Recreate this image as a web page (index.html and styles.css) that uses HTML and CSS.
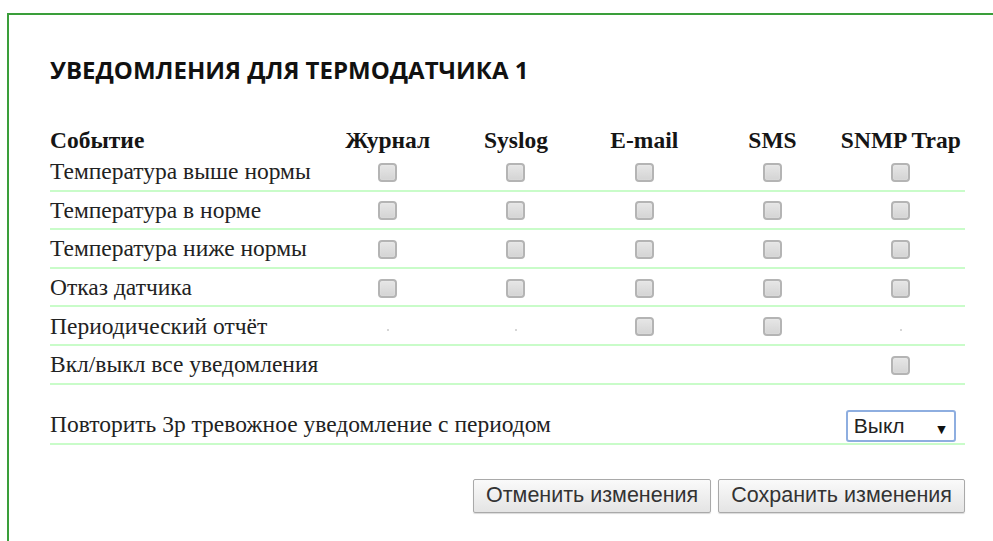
FILE: index.html
```html
<!DOCTYPE html>
<html lang="ru">
<head>
<meta charset="utf-8">
<title>Уведомления для термодатчика 1</title>
<link rel="stylesheet" href="styles.css">
</head>
<body>
<div class="panel">
  <h2 class="title">УВЕДОМЛЕНИЯ ДЛЯ ТЕРМОДАТЧИКА 1</h2>
  <table class="notify">
    <colgroup>
      <col class="c-event">
      <col class="c-ch"><col class="c-ch"><col class="c-ch"><col class="c-ch"><col class="c-ch">
    </colgroup>
    <thead>
      <tr>
        <th class="ev">Событие</th>
        <th>Журнал</th>
        <th>Syslog</th>
        <th>E-mail</th>
        <th>SMS</th>
        <th>SNMP Trap</th>
      </tr>
    </thead>
    <tbody>
      <tr class="row">
        <td class="ev">Температура выше нормы</td>
        <td><input type="checkbox" class="cb"></td>
        <td><input type="checkbox" class="cb"></td>
        <td><input type="checkbox" class="cb"></td>
        <td><input type="checkbox" class="cb"></td>
        <td><input type="checkbox" class="cb"></td>
      </tr>
      <tr class="row">
        <td class="ev">Температура в норме</td>
        <td><input type="checkbox" class="cb"></td>
        <td><input type="checkbox" class="cb"></td>
        <td><input type="checkbox" class="cb"></td>
        <td><input type="checkbox" class="cb"></td>
        <td><input type="checkbox" class="cb"></td>
      </tr>
      <tr class="row">
        <td class="ev">Температура ниже нормы</td>
        <td><input type="checkbox" class="cb"></td>
        <td><input type="checkbox" class="cb"></td>
        <td><input type="checkbox" class="cb"></td>
        <td><input type="checkbox" class="cb"></td>
        <td><input type="checkbox" class="cb"></td>
      </tr>
      <tr class="row">
        <td class="ev">Отказ датчика</td>
        <td><input type="checkbox" class="cb"></td>
        <td><input type="checkbox" class="cb"></td>
        <td><input type="checkbox" class="cb"></td>
        <td><input type="checkbox" class="cb"></td>
        <td><input type="checkbox" class="cb"></td>
      </tr>
      <tr class="row">
        <td class="ev">Периодический отчёт</td>
        <td><span class="na"></span></td>
        <td><span class="na"></span></td>
        <td><input type="checkbox" class="cb"></td>
        <td><input type="checkbox" class="cb"></td>
        <td><span class="na"></span></td>
      </tr>
      <tr class="row">
        <td class="ev">Вкл/выкл все уведомления</td>
        <td></td>
        <td></td>
        <td></td>
        <td></td>
        <td><input type="checkbox" class="cb"></td>
      </tr>
      <tr class="spacer"><td colspan="6"></td></tr>
      <tr class="row repeat">
        <td class="ev" colspan="5">Повторить 3р тревожное уведомление с периодом</td>
        <td>
          <span class="select-wrap">
            <select class="period">
              <option>Выкл</option>
              <option>1 мин</option>
              <option>5 мин</option>
              <option>15 мин</option>
              <option>1 час</option>
            </select>
          </span>
        </td>
      </tr>
    </tbody>
  </table>
  <div class="actions">
    <button type="button" class="btn">Отменить изменения</button>
    <button type="button" class="btn">Сохранить изменения</button>
  </div>
</div>
</body>
</html>
```
FILE: styles.css
```css
html, body {
  margin: 0;
  padding: 0;
  background: #fff;
}

body {
  padding: 13px 0 0 7px;
  font-family: "Liberation Serif", "Times New Roman", serif;
  color: #222;
  overflow: hidden;
}

/* green frame: only top and left edges are drawn */
.panel {
  border-top: 2px solid #3a9e3a;
  border-left: 2px solid #3a9e3a;
  padding: 0 0 40px 41px;
}

.title {
  margin: 41px 0 0 0;
  font-family: "Open Sans", "Liberation Sans", sans-serif;
  font-weight: 700;
  font-size: 24px;
  line-height: 28px;
  color: #111;
}

.notify {
  margin-top: 43px;
  border-collapse: collapse;
  table-layout: fixed;
  width: 915px;
  font-size: 23.5px;
}

.c-event { width: 273px; }
.c-ch { width: 128px; }

.notify th {
  font-weight: 700;
  text-align: center;
  padding: 0;
  height: 26px;
  line-height: 26px;
  vertical-align: middle;
  color: #151515;
}

.notify td {
  padding: 0;
  text-align: center;
  vertical-align: middle;
}

.notify .ev {
  text-align: left;
}

.row td {
  height: 36.6px;
  border-bottom: 2px solid #c9fcc9;
  line-height: 24px;
}

.spacer td {
  height: 22px;
}

.repeat td {
  height: 35px;
  vertical-align: bottom;
  padding-bottom: 1px;
}

.repeat .ev {
  vertical-align: middle;
}

.cb {
  appearance: none;
  -webkit-appearance: none;
  display: inline-block;
  vertical-align: middle;
  width: 19px;
  height: 19px;
  margin: 0 0 2px 0;
  border: 2px solid #b4b4b4;
  border-radius: 4px;
  background: linear-gradient(#e6e6e6, #d4d4d4);
  box-shadow: inset 0 0 1px #fff;
}

/* unavailable channel marker */
.na {
  display: block;
  width: 2px;
  height: 2px;
  margin: 8px auto 0;
  border-radius: 1px;
  background: #c8c8c8;
}

.select-wrap {
  position: relative;
  display: inline-block;
  vertical-align: bottom;
}

.select-wrap::after {
  content: "▼";
  position: absolute;
  right: 10px;
  top: 8px;
  font-family: "DejaVu Sans", sans-serif;
  font-size: 11px;
  color: #111;
  pointer-events: none;
}

.period {
  appearance: none;
  -webkit-appearance: none;
  display: block;
  width: 110px;
  height: 32px;
  padding: 0 0 0 6px;
  border: 2px solid #8eaee0;
  border-radius: 3px;
  background: #fff;
  font-family: "Liberation Sans", Arial, sans-serif;
  font-size: 21px;
  color: #222;
}

.actions {
  display: flex;
  justify-content: flex-end;
  gap: 7px;
  width: 915px;
  margin-top: 34px;
}

.btn {
  height: 34px;
  padding: 0 12px;
  border: 1px solid #a9a9a9;
  border-radius: 2px;
  background: linear-gradient(#fafafa, #e4e4e4);
  box-shadow: 0 1px 1px rgba(0,0,0,0.15);
  font-family: "Liberation Sans", Arial, sans-serif;
  font-size: 21.5px;
  color: #333;
}
```
